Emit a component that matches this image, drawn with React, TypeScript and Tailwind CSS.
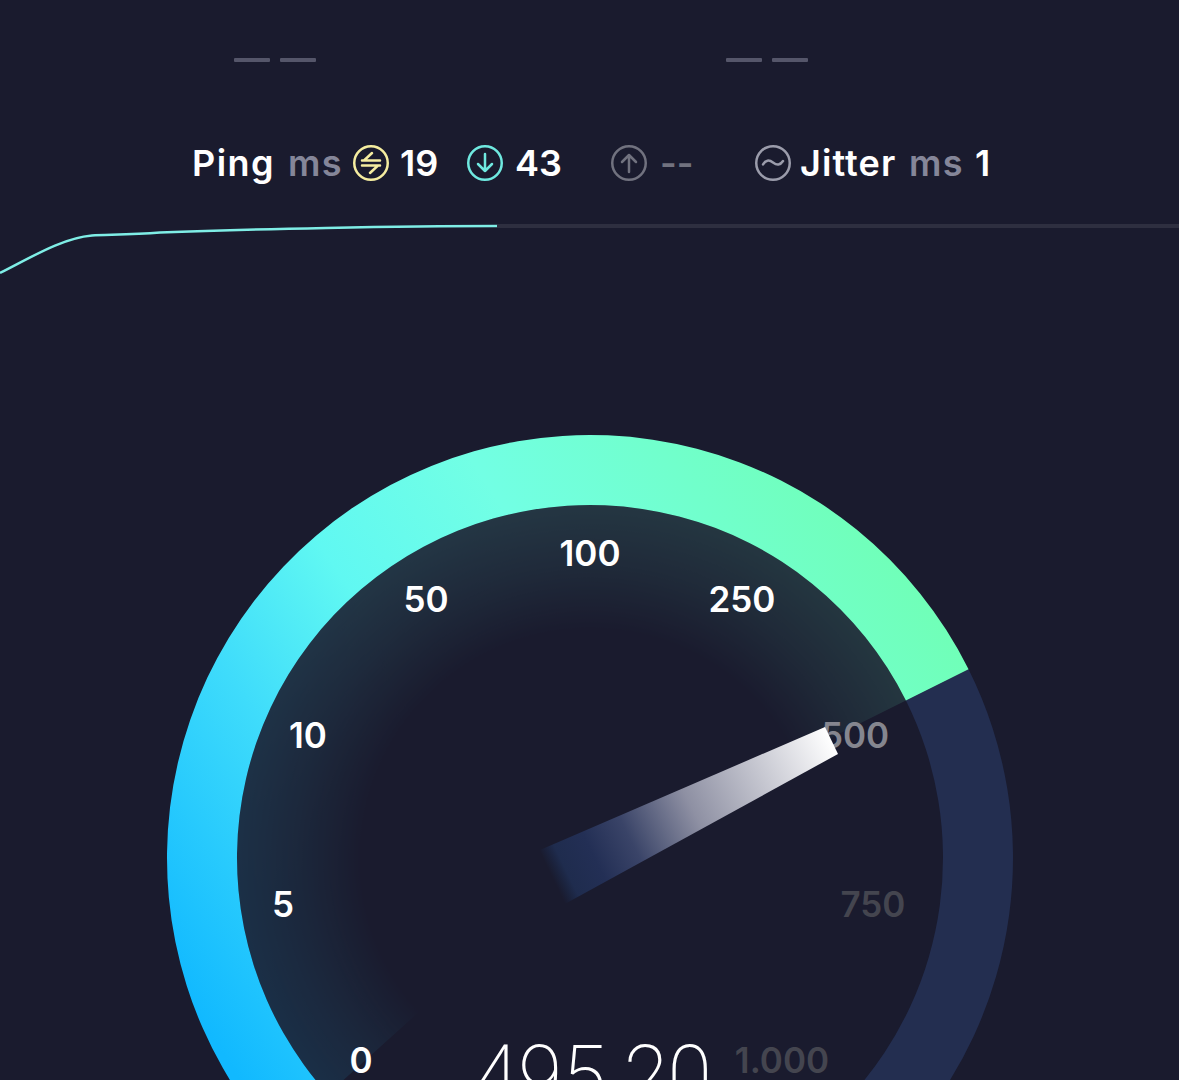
const CX = 590;
const CY = 858;

// point on a circle around the gauge centre, degrees measured clockwise from 12 o'clock
function pt(r: number, deg: number) {
  const a = (deg * Math.PI) / 180;
  return `${(CX + r * Math.sin(a)).toFixed(2)} ${(CY - r * Math.cos(a)).toFixed(2)}`;
}

function ring(r1: number, r2: number, from: number, to: number) {
  const big = to - from > 180 ? 1 : 0;
  return `M${pt(r2, from)} A${r2} ${r2} 0 ${big} 1 ${pt(r2, to)} L${pt(r1, to)} A${r1} ${r1} 0 ${big} 0 ${pt(r1, from)} Z`;
}

function Ping() {
  return (
    <svg width="36" height="36" viewBox="0 0 36 36" fill="none" strokeLinecap="round" strokeLinejoin="round">
      <circle cx="18" cy="18" r="16.750" stroke="#f5eda0" strokeWidth="2.500" />
      <path d="M9 15.500h18M19 8l-8 7.500M27 20.500H9M17 28l8-7.500" stroke="#f5eda0" strokeWidth="2.500" />
    </svg>
  );
}

function Down() {
  return (
    <svg width="36" height="36" viewBox="0 0 36 36" fill="none" strokeLinecap="round" strokeLinejoin="round">
      <circle cx="18" cy="18" r="16.750" stroke="#6fe9e0" strokeWidth="2.500" />
      <path d="M18 9v17M11 19l7 7 7-7" stroke="#6fe9e0" strokeWidth="2.500" />
    </svg>
  );
}

function Up() {
  return (
    <svg width="36" height="36" viewBox="0 0 36 36" fill="none" strokeLinecap="round" strokeLinejoin="round">
      <circle cx="18" cy="18" r="16.750" stroke="#71727f" strokeWidth="2.500" />
      <path d="M18 27V10M11 17l7-7 7 7" stroke="#71727f" strokeWidth="2.500" />
    </svg>
  );
}

function JitterIcon() {
  return (
    <svg width="36" height="36" viewBox="0 0 36 36" fill="none" strokeLinecap="round">
      <circle cx="18" cy="18" r="16.750" stroke="#9b9cab" strokeWidth="2.500" />
      <path d="M8 19.500c2.500-4.500 6-5 10-2s7 3 10-1.500" stroke="#9b9cab" strokeWidth="2.500" />
    </svg>
  );
}

const labels = [
  { t: '0', x: 361, y: 1060, c: 'text-white' },
  { t: '5', x: 283, y: 904, c: 'text-white' },
  { t: '10', x: 308, y: 735, c: 'text-white' },
  { t: '50', x: 426, y: 599, c: 'text-white' },
  { t: '100', x: 590, y: 553, c: 'text-white' },
  { t: '250', x: 742, y: 599, c: 'text-white' },
  { t: '500', x: 855, y: 735, c: 'text-[#85868f]' },
  { t: '750', x: 873, y: 904, c: 'text-[#44454f]' },
  { t: '1.000', x: 782, y: 1060, c: 'text-[#44454f]' },
];

export default function App() {
  return (
    <div
      className="relative h-[1080px] w-[1179px] overflow-hidden bg-[#1a1b2e]"
      style={{ fontFamily: 'Inter, "Noto Sans", sans-serif' }}
    >
      <div className="flex h-[120px] items-start pt-[58px]">
        <div className="ml-[234px] flex gap-[10px]">
          <div className="h-[4px] w-[36px] rounded-[1px] bg-[#55566a]" />
          <div className="h-[4px] w-[36px] rounded-[1px] bg-[#55566a]" />
        </div>
        <div className="ml-[410px] flex gap-[10px]">
          <div className="h-[4px] w-[36px] rounded-[1px] bg-[#55566a]" />
          <div className="h-[4px] w-[36px] rounded-[1px] bg-[#55566a]" />
        </div>
      </div>

      <div className="-mt-[1px] flex h-[88px] items-center pl-[192px] text-[36px] font-semibold leading-none tracking-[0.04em] text-white">
        <span className="w-[96px]">Ping</span>
        <span className="w-[65px] text-[#858699]">ms</span>
        <Ping />
        <span className="ml-[11px] w-[67px] tracking-normal">19</span>
        <Down />
        <span className="ml-[12px] w-[96px] tracking-normal">43</span>
        <Up />
        <span className="ml-[13px] w-[95px] tracking-normal text-[#71727f]">--</span>
        <JitterIcon />
        <span className="ml-[9px] w-[109px] tracking-[0.03em]">Jitter</span>
        <span className="w-[66px] text-[#858699]">ms</span>
        <span>1</span>
      </div>

      <svg width="1179" height="80" viewBox="0 208 1179 80" className="mt-[1px] block">
        <path d="M497 226H1179" stroke="#2e2f40" strokeWidth="4" />
        <path
          d="M0 273C30 258 62 238 92 235.500C105 234.500 130 235 160 232.500C250 229 400 226 497 226"
          fill="none"
          stroke="#7feee6"
          strokeWidth="2.500"
        />
      </svg>

      <svg width="1179" height="1080" viewBox="0 0 1179 1080" className="absolute left-0 top-0">
        <defs>
          <linearGradient id="arc" gradientUnits="userSpaceOnUse" x1="240" y1="1080" x2="960" y2="600">
            <stop offset="0" stopColor="#11b9ff" />
            <stop offset="0.25" stopColor="#3fdcfb" />
            <stop offset="0.42" stopColor="#60f8f2" />
            <stop offset="0.62" stopColor="#72ffe4" />
            <stop offset="1" stopColor="#70ffb4" />
          </linearGradient>
          <radialGradient id="fade" gradientUnits="userSpaceOnUse" cx={CX} cy={CY} r="353">
            <stop offset="0.64" stopColor="#000" />
            <stop offset="0.84" stopColor="#333" />
            <stop offset="1" stopColor="#555" />
          </radialGradient>
          <mask id="glow" maskUnits="userSpaceOnUse" x="0" y="0" width="1179" height="1080">
            <rect width="1179" height="1080" fill="url(#fade)" />
          </mask>
        </defs>
        <path d={ring(353, 423, 63.500, 132)} fill="#232e50" />
        <path d={ring(200, 353, -132, 63.500)} fill="url(#arc)" opacity="0.36" mask="url(#glow)" />
        <path d={ring(353, 423, -132, 63.500)} fill="url(#arc)" />
      </svg>

      {labels.map((l) => (
        <span
          key={l.t}
          className={`absolute -translate-x-1/2 -translate-y-1/2 text-[35px] font-semibold leading-none ${l.c}`}
          style={{ left: l.x, top: l.y }}
        >
          {l.t}
        </span>
      ))}

      <svg width="1179" height="1080" viewBox="0 0 1179 1080" className="absolute left-0 top-0">
        <defs>
          <linearGradient id="needle" gradientUnits="userSpaceOnUse" x1="832" y1="741" x2="552" y2="877">
            <stop offset="0" stopColor="#ffffff" />
            <stop offset="0.5" stopColor="#8e90a3" />
            <stop offset="0.72" stopColor="#3a4468" />
            <stop offset="0.85" stopColor="#232f55" />
            <stop offset="0.95" stopColor="#1f2c4e" />
            <stop offset="1" stopColor="#1a2a4c" stopOpacity="0" />
          </linearGradient>
        </defs>
        <path d="M825 727L838 754L563 905L540 850Z" fill="url(#needle)" />
      </svg>

      <span
        className="absolute left-[593px] top-[1034px] origin-top -translate-x-1/2 scale-x-[0.95] text-[84px] font-[200] leading-none text-white"
        style={{ fontFamily: 'Roboto, sans-serif' }}
      >
        495.20
      </span>
    </div>
  );
}
